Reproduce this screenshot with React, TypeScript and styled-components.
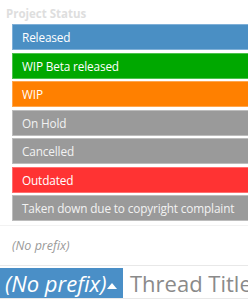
import React from "react";
import styled, { createGlobalStyle } from "styled-components";

const GlobalStyle = createGlobalStyle`
  html, body {
    margin: 0;
    padding: 0;
    background: #fff;
  }
  body {
    font-family: "Open Sans", "Liberation Sans", sans-serif;
  }
`;

const prefixes = [
  { label: "Released", bg: "#4a8fc4", edge: "#7fb0d8", color: "#fff" },
  { label: "WIP Beta released", bg: "#00a800", edge: "#4cc24c", color: "#fff" },
  { label: "WIP", bg: "#ff8000", edge: "#ffa64d", color: "#fff" },
  { label: "On Hold", bg: "#9a9a9a", edge: "#bdbdbd", color: "#f2f2f2" },
  { label: "Cancelled", bg: "#9a9a9a", edge: "#bdbdbd", color: "#f2f2f2" },
  { label: "Outdated", bg: "#ff3333", edge: "#ff7070", color: "#fff" },
  { label: "Taken down due to copyright complaint", bg: "#9a9a9a", edge: "#bdbdbd", color: "#f2f2f2" },
];

export default function App() {
  return (
    <>
      <GlobalStyle />
      <Page>
        <Menu>
          <Heading>Project Status</Heading>
          <PrefixList>
            {prefixes.map((p) => (
              <PrefixItem key={p.label} $bg={p.bg} $edge={p.edge} $color={p.color}>
                {p.label}
              </PrefixItem>
            ))}
          </PrefixList>
          <NoPrefix>(No prefix)</NoPrefix>
        </Menu>
        <TitleRow>
          <PrefixButton>
            (No prefix)
            <Caret />
          </PrefixButton>
          <TitleInput>Thread Title...</TitleInput>
        </TitleRow>
      </Page>
    </>
  );
}

const Page = styled.div`
  width: 248px;
  height: 300px;
  overflow: hidden;
`;

const Menu = styled.div`
  padding: 6px 0 0 0;
  border-bottom: 1px solid #e8e8e8;
`;

const Heading = styled.div`
  padding-left: 6px;
  font-size: 11.5px;
  font-weight: 700;
  line-height: 16px;
  color: #dedede;
`;

const PrefixList = styled.div`
  display: flex;
  flex-direction: column;
  gap: 2.5px;
  padding: 2px 0 4px 12px;
  border-bottom: 1px solid #f2f2f2;
`;

const PrefixItem = styled.div<{ $bg: string; $edge: string; $color: string }>`
  width: 260px;
  height: 26px;
  box-sizing: border-box;
  display: flex;
  align-items: center;
  padding-left: 9px;
  background: ${(p) => p.$bg};
  border: 1px solid ${(p) => p.$edge};
  border-right: none;
  color: ${(p) => p.$color};
  font-size: 11.8px;
  letter-spacing: -0.15px;
  white-space: nowrap;
`;

const NoPrefix = styled.div`
  padding: 11px 0 10px 12px;
  font-size: 12.5px;
  font-style: italic;
  color: #9a9a9a;
  line-height: 18px;
`;

const TitleRow = styled.div`
  display: flex;
  align-items: stretch;
  margin-top: 2px;
  height: 30px;
  border-bottom: 1px solid #e8e8e8;
`;

const PrefixButton = styled.div`
  display: flex;
  align-items: center;
  flex-shrink: 0;
  width: 123px;
  box-sizing: border-box;
  padding-left: 5px;
  background: #4a8fc7;
  color: #fff;
  font-size: 22px;
  font-style: italic;
  white-space: nowrap;
`;

const Caret = styled.span`
  display: inline-block;
  margin: 5px 0 0 1px;
  width: 0;
  height: 0;
  border-left: 5px solid transparent;
  border-right: 5px solid transparent;
  border-bottom: 6px solid #fff;
`;

const TitleInput = styled.div`
  display: flex;
  align-items: center;
  padding-left: 7px;
  font-size: 22px;
  color: #8a8a8a;
  white-space: nowrap;
`;
